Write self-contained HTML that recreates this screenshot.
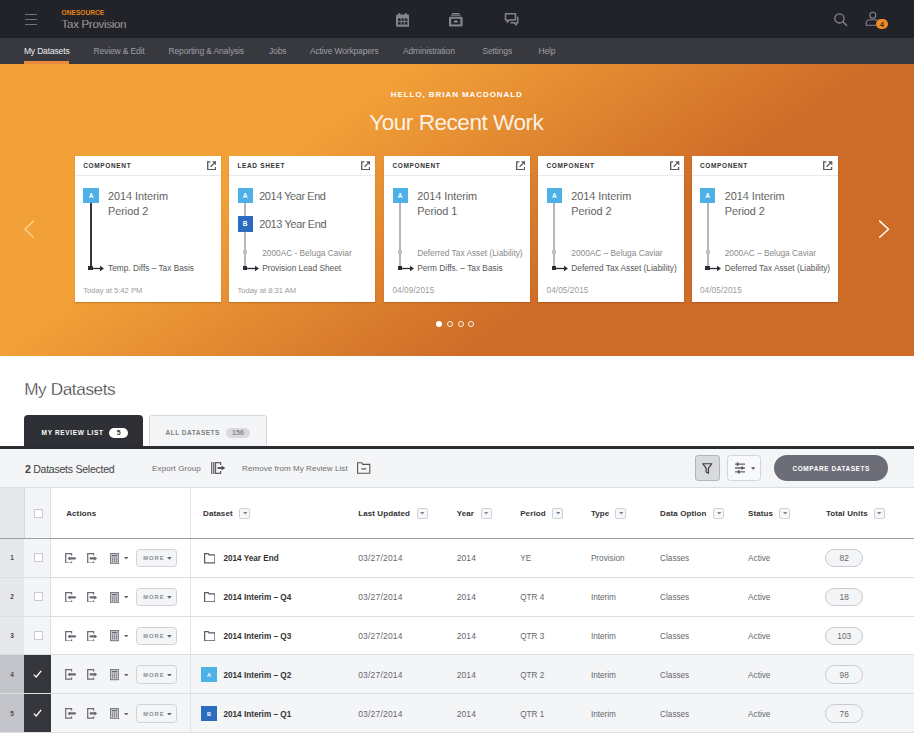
<!DOCTYPE html>
<html><head><meta charset="utf-8"><title>Tax Provision</title>
<style>
html,body{margin:0;padding:0;background:#fff;}
body{width:922px;height:737px;overflow:hidden;font-family:"Liberation Sans",sans-serif;}
#app{position:absolute;left:0;top:0;width:914px;height:733px;overflow:hidden;background:#fff;}
.b{position:absolute;display:block;}
.t{position:absolute;white-space:nowrap;line-height:1;}
</style></head><body><div id="app">
<div class="b" style="left:0.00px;top:0.00px;width:914.00px;height:38.00px;background:#222328"></div>
<div class="b" style="left:24.70px;top:13.95px;width:12.30px;height:1.50px;background:#74757c"></div>
<div class="b" style="left:24.70px;top:18.75px;width:12.30px;height:1.50px;background:#74757c"></div>
<div class="b" style="left:24.70px;top:23.55px;width:12.30px;height:1.50px;background:#74757c"></div>
<div class="t" style="left:61.60px;top:10px;font-size:6.6px;color:#E8811A;font-weight:700;">ONESOURCE</div>
<div class="t" style="left:61.60px;top:19px;font-size:11.5px;color:#c6c7cb;letter-spacing:-0.3px;-webkit-text-stroke:0.25px #222328;">Tax Provision</div>
<svg class="b" style="left:395.80px;top:12.60px;" width="13.4" height="14" viewBox="0 0 13.4 14"><rect x="0" y="1.6" width="13.4" height="12.2" rx="1.2" fill="#85868d"/><rect x="2.6" y="0" width="1.7" height="3" fill="#85868d"/><rect x="9" y="0" width="1.7" height="3" fill="#85868d"/><rect x="2" y="5.4" width="9.4" height="6.2" fill="#26272c"/><path d="M5.1 5.4v6.2M8.3 5.4v6.2M2 8.5h9.4" stroke="#85868d" stroke-width="0.9" fill="none"/></svg>
<svg class="b" style="left:449.00px;top:13.00px;" width="13.6" height="13.6" viewBox="0 0 13.6 13.6"><path d="M3 0.6h7.6M2 2.3h9.6" stroke="#85868d" stroke-width="1.1" fill="none"/><rect x="0" y="3.7" width="13.6" height="9.8" rx="1.3" fill="#85868d"/><rect x="2.2" y="5.8" width="9.2" height="5.6" fill="#26272c"/><rect x="5.2" y="7.8" width="3.2" height="1.5" fill="#b0b1b6"/></svg>
<svg class="b" style="left:504.20px;top:12.20px;" width="15" height="14" viewBox="0 0 15 14"><path d="M1.5 1.7h10v6.3h-6.3l-2 2.2v-2.2h-1.7z" fill="none" stroke="#85868d" stroke-width="1.5" stroke-linejoin="round"/><path d="M13.2 5.2h0.6v5.6h-1.4v2.2l-2.2-2.2h-3.8" fill="none" stroke="#85868d" stroke-width="1.4" stroke-linejoin="round"/></svg>
<svg class="b" style="left:833.00px;top:11.50px;" width="15" height="15" viewBox="0 0 15 15"><circle cx="6.4" cy="6.4" r="4.6" fill="none" stroke="#85868d" stroke-width="1.3"/><path d="M9.8 9.8L13.6 13.6" stroke="#85868d" stroke-width="1.4" stroke-linecap="round"/></svg>
<svg class="b" style="left:865.00px;top:11.00px;" width="14" height="16" viewBox="0 0 14 16"><circle cx="7.8" cy="4.2" r="3" fill="none" stroke="#85868d" stroke-width="1.1"/><path d="M1.2 14.3v-2.2c0-2 2-3.4 4-3.4h5.2c2 0 3 1.4 3 3.4v2.2z" fill="none" stroke="#85868d" stroke-width="1.1"/></svg>
<div class="b" style="left:875.50px;top:19.10px;width:12.90px;height:9.80px;background:#EE8A25;border-radius:5px"></div>
<div class="t" style="left:882.00px;top:21px;font-size:7px;color:#33250f;font-weight:700;transform:translateX(-50%);">4</div>
<div class="b" style="left:0.00px;top:38.00px;width:914.00px;height:25.70px;background:#38393F"></div>
<div class="t" style="left:23.90px;top:47px;font-size:8.5px;color:#ededef;letter-spacing:-0.15px;">My Datasets</div>
<div class="t" style="left:93.50px;top:47px;font-size:8.5px;color:#9d9ea5;letter-spacing:-0.15px;">Review &amp; Edit</div>
<div class="t" style="left:168.50px;top:47px;font-size:8.5px;color:#9d9ea5;letter-spacing:-0.15px;">Reporting &amp; Analysis</div>
<div class="t" style="left:269.00px;top:47px;font-size:8.5px;color:#9d9ea5;letter-spacing:-0.15px;">Jobs</div>
<div class="t" style="left:310.00px;top:47px;font-size:8.5px;color:#9d9ea5;letter-spacing:-0.15px;">Active Workpapers</div>
<div class="t" style="left:403.00px;top:47px;font-size:8.5px;color:#9d9ea5;letter-spacing:-0.15px;">Administration</div>
<div class="t" style="left:482.50px;top:47px;font-size:8.5px;color:#9d9ea5;letter-spacing:-0.15px;">Settings</div>
<div class="t" style="left:538.50px;top:47px;font-size:8.5px;color:#9d9ea5;letter-spacing:-0.15px;">Help</div>
<div class="b" style="left:23.90px;top:60.90px;width:45.20px;height:2.80px;background:#E98A3C"></div>
<div class="b" style="left:0.00px;top:63.70px;width:914.00px;height:292.10px;background:linear-gradient(145deg,#F2A038 0%,#F2A038 31%,#CD6B28 67%,#CD6B28 100%)"></div>
<div class="t" style="left:456.80px;top:91px;font-size:8px;color:#fff;font-weight:700;letter-spacing:0.93px;transform:translateX(-50%);">HELLO, BRIAN MACDONALD</div>
<div class="t" style="left:456.30px;top:112px;font-size:22.6px;color:rgba(255,255,255,.88);letter-spacing:-0.5px;transform:translateX(-50%);">Your Recent Work</div>
<svg class="b" style="left:20.00px;top:215.00px;" width="20" height="28" viewBox="0 0 20 28"><path d="M13.4 6.1L4.9 14.2L13.4 22.2" fill="none" stroke="#fbd28c" stroke-width="1.5" stroke-linecap="round" stroke-linejoin="round"/></svg>
<svg class="b" style="left:870.00px;top:215.00px;" width="24" height="28" viewBox="0 0 24 28"><path d="M9.7 6.1L18.5 14.2L9.7 22.2" fill="none" stroke="#fff" stroke-width="1.5" stroke-linecap="round" stroke-linejoin="round"/></svg>
<div class="b" style="left:435.90px;top:321.20px;width:6.00px;height:6.00px;background:#fff;border-radius:50%"></div>
<div class="b" style="left:446.80px;top:321.20px;width:6.00px;height:6.00px;border:1.8px solid #fdf1e4;border-radius:50%;box-sizing:border-box"></div>
<div class="b" style="left:457.60px;top:321.20px;width:6.00px;height:6.00px;border:1.8px solid #fdf1e4;border-radius:50%;box-sizing:border-box"></div>
<div class="b" style="left:467.90px;top:321.20px;width:6.00px;height:6.00px;border:1.8px solid #fdf1e4;border-radius:50%;box-sizing:border-box"></div>
<div class="b" style="left:75.00px;top:155.80px;width:146.00px;height:146.60px;background:#fff;box-shadow:0 1px 1px rgba(130,55,0,.3)"></div>
<div class="b" style="left:75.00px;top:175.00px;width:146.00px;height:1.00px;background:#e9eaec"></div>
<div class="t" style="left:83.20px;top:163px;font-size:6.5px;color:#333;font-weight:700;letter-spacing:0.65px;">COMPONENT</div>
<svg class="b" style="left:206.70px;top:160.70px;" width="9.6" height="9.4" viewBox="0 0 9.6 9.4"><path d="M3.4 0.9H0.7v7.8h7.9V6" fill="none" stroke="#5a5b63" stroke-width="1.35"/><path d="M3.6 5.8L8 1.4" fill="none" stroke="#5a5b63" stroke-width="1.3"/><path d="M5 0.3h4.3v4.3z" fill="#5a5b63"/></svg>
<div class="b" style="left:89.90px;top:203.00px;width:2.00px;height:65.00px;background:#333840"></div>
<div class="b" style="left:83.40px;top:188.20px;width:15.20px;height:15.30px;background:#4DB1E6"></div>
<div class="t" style="left:91.00px;top:193px;font-size:6.5px;color:#fff;font-weight:700;transform:translateX(-50%);">A</div>
<div class="t" style="left:108.00px;top:191px;font-size:10.9px;color:#2c2c2c;letter-spacing:-0.05px;-webkit-text-stroke:0.2px #fff;">2014 Interim</div>
<div class="t" style="left:108.00px;top:206px;font-size:10.9px;color:#2c2c2c;letter-spacing:-0.05px;-webkit-text-stroke:0.2px #fff;">Period 2</div>
<div class="b" style="left:88.40px;top:265.70px;width:4.80px;height:4.60px;background:#2a2d33"></div>
<svg class="b" style="left:92.40px;top:264.50px;" width="13" height="7" viewBox="0 0 13 7"><path d="M0 3.5h9" stroke="#2a2d33" stroke-width="1.3"/><path d="M8 0.8L12 3.5L8 6.2z" fill="#2a2d33"/></svg>
<div class="t" style="left:108.00px;top:264px;font-size:8.3px;color:#565656;">Temp. Diffs – Tax Basis</div>
<div class="t" style="left:83.20px;top:287px;font-size:7.6px;color:#9c9c9c;">Today at 5:42 PM</div>
<div class="b" style="left:229.20px;top:155.80px;width:146.00px;height:146.60px;background:#fff;box-shadow:0 1px 1px rgba(130,55,0,.3)"></div>
<div class="b" style="left:229.20px;top:175.00px;width:146.00px;height:1.00px;background:#e9eaec"></div>
<div class="t" style="left:237.40px;top:163px;font-size:6.5px;color:#333;font-weight:700;letter-spacing:0.65px;">LEAD SHEET</div>
<svg class="b" style="left:360.90px;top:160.70px;" width="9.6" height="9.4" viewBox="0 0 9.6 9.4"><path d="M3.4 0.9H0.7v7.8h7.9V6" fill="none" stroke="#5a5b63" stroke-width="1.35"/><path d="M3.6 5.8L8 1.4" fill="none" stroke="#5a5b63" stroke-width="1.3"/><path d="M5 0.3h4.3v4.3z" fill="#5a5b63"/></svg>
<div class="b" style="left:244.10px;top:203.00px;width:2.00px;height:65.00px;background:#b4b7bd"></div>
<div class="b" style="left:237.60px;top:188.20px;width:15.20px;height:15.30px;background:#4DB1E6"></div>
<div class="t" style="left:245.20px;top:193px;font-size:6.5px;color:#fff;font-weight:700;transform:translateX(-50%);">A</div>
<div class="b" style="left:237.60px;top:216.00px;width:15.20px;height:15.60px;background:#2B6CC0"></div>
<div class="t" style="left:245.20px;top:221px;font-size:6.5px;color:#fff;font-weight:700;transform:translateX(-50%);">B</div>
<div class="t" style="left:259.20px;top:219px;font-size:11px;color:#2c2c2c;letter-spacing:-0.4px;-webkit-text-stroke:0.2px #fff;">2013 Year End</div>
<div class="t" style="left:259.20px;top:191px;font-size:10.9px;color:#2c2c2c;letter-spacing:-0.4px;-webkit-text-stroke:0.2px #fff;">2014 Year End</div>
<div class="b" style="left:243.10px;top:250.00px;width:4.20px;height:4.40px;background:#bfc2c7"></div>
<div class="t" style="left:262.20px;top:249px;font-size:8.3px;color:#8a8a8a;">2000AC - Beluga Caviar</div>
<div class="b" style="left:242.60px;top:265.70px;width:4.80px;height:4.60px;background:#2a2d33"></div>
<svg class="b" style="left:246.60px;top:264.50px;" width="13" height="7" viewBox="0 0 13 7"><path d="M0 3.5h9" stroke="#2a2d33" stroke-width="1.3"/><path d="M8 0.8L12 3.5L8 6.2z" fill="#2a2d33"/></svg>
<div class="t" style="left:262.20px;top:264px;font-size:8.3px;color:#565656;">Provision Lead Sheet</div>
<div class="t" style="left:237.40px;top:287px;font-size:7.6px;color:#9c9c9c;">Today at 8:31 AM</div>
<div class="b" style="left:384.20px;top:155.80px;width:146.00px;height:146.60px;background:#fff;box-shadow:0 1px 1px rgba(130,55,0,.3)"></div>
<div class="b" style="left:384.20px;top:175.00px;width:146.00px;height:1.00px;background:#e9eaec"></div>
<div class="t" style="left:392.40px;top:163px;font-size:6.5px;color:#333;font-weight:700;letter-spacing:0.65px;">COMPONENT</div>
<svg class="b" style="left:515.90px;top:160.70px;" width="9.6" height="9.4" viewBox="0 0 9.6 9.4"><path d="M3.4 0.9H0.7v7.8h7.9V6" fill="none" stroke="#5a5b63" stroke-width="1.35"/><path d="M3.6 5.8L8 1.4" fill="none" stroke="#5a5b63" stroke-width="1.3"/><path d="M5 0.3h4.3v4.3z" fill="#5a5b63"/></svg>
<div class="b" style="left:399.10px;top:203.00px;width:2.00px;height:65.00px;background:#b4b7bd"></div>
<div class="b" style="left:392.60px;top:188.20px;width:15.20px;height:15.30px;background:#4DB1E6"></div>
<div class="t" style="left:400.20px;top:193px;font-size:6.5px;color:#fff;font-weight:700;transform:translateX(-50%);">A</div>
<div class="t" style="left:417.20px;top:191px;font-size:10.9px;color:#2c2c2c;letter-spacing:-0.05px;-webkit-text-stroke:0.2px #fff;">2014 Interim</div>
<div class="t" style="left:417.20px;top:206px;font-size:10.9px;color:#2c2c2c;letter-spacing:-0.05px;-webkit-text-stroke:0.2px #fff;">Period 1</div>
<div class="b" style="left:398.10px;top:250.00px;width:4.20px;height:4.40px;background:#bfc2c7"></div>
<div class="t" style="left:417.20px;top:249px;font-size:8.3px;color:#8a8a8a;">Deferred Tax Asset (Liability)</div>
<div class="b" style="left:397.60px;top:265.70px;width:4.80px;height:4.60px;background:#2a2d33"></div>
<svg class="b" style="left:401.60px;top:264.50px;" width="13" height="7" viewBox="0 0 13 7"><path d="M0 3.5h9" stroke="#2a2d33" stroke-width="1.3"/><path d="M8 0.8L12 3.5L8 6.2z" fill="#2a2d33"/></svg>
<div class="t" style="left:417.20px;top:264px;font-size:8.3px;color:#565656;">Perm Diffs. – Tax Basis</div>
<div class="t" style="left:392.40px;top:287px;font-size:8.2px;color:#9c9c9c;letter-spacing:0.1px;">04/09/2015</div>
<div class="b" style="left:538.30px;top:155.80px;width:146.00px;height:146.60px;background:#fff;box-shadow:0 1px 1px rgba(130,55,0,.3)"></div>
<div class="b" style="left:538.30px;top:175.00px;width:146.00px;height:1.00px;background:#e9eaec"></div>
<div class="t" style="left:546.50px;top:163px;font-size:6.5px;color:#333;font-weight:700;letter-spacing:0.65px;">COMPONENT</div>
<svg class="b" style="left:670.00px;top:160.70px;" width="9.6" height="9.4" viewBox="0 0 9.6 9.4"><path d="M3.4 0.9H0.7v7.8h7.9V6" fill="none" stroke="#5a5b63" stroke-width="1.35"/><path d="M3.6 5.8L8 1.4" fill="none" stroke="#5a5b63" stroke-width="1.3"/><path d="M5 0.3h4.3v4.3z" fill="#5a5b63"/></svg>
<div class="b" style="left:553.20px;top:203.00px;width:2.00px;height:65.00px;background:#b4b7bd"></div>
<div class="b" style="left:546.70px;top:188.20px;width:15.20px;height:15.30px;background:#4DB1E6"></div>
<div class="t" style="left:554.30px;top:193px;font-size:6.5px;color:#fff;font-weight:700;transform:translateX(-50%);">A</div>
<div class="t" style="left:571.30px;top:191px;font-size:10.9px;color:#2c2c2c;letter-spacing:-0.05px;-webkit-text-stroke:0.2px #fff;">2014 Interim</div>
<div class="t" style="left:571.30px;top:206px;font-size:10.9px;color:#2c2c2c;letter-spacing:-0.05px;-webkit-text-stroke:0.2px #fff;">Period 2</div>
<div class="b" style="left:552.20px;top:250.00px;width:4.20px;height:4.40px;background:#bfc2c7"></div>
<div class="t" style="left:571.30px;top:249px;font-size:8.3px;color:#8a8a8a;">2000AC – Beluga Caviar</div>
<div class="b" style="left:551.70px;top:265.70px;width:4.80px;height:4.60px;background:#2a2d33"></div>
<svg class="b" style="left:555.70px;top:264.50px;" width="13" height="7" viewBox="0 0 13 7"><path d="M0 3.5h9" stroke="#2a2d33" stroke-width="1.3"/><path d="M8 0.8L12 3.5L8 6.2z" fill="#2a2d33"/></svg>
<div class="t" style="left:571.30px;top:264px;font-size:8.3px;color:#565656;">Deferred Tax Asset (Liability)</div>
<div class="t" style="left:546.50px;top:287px;font-size:8.2px;color:#9c9c9c;letter-spacing:0.1px;">04/05/2015</div>
<div class="b" style="left:691.70px;top:155.80px;width:146.00px;height:146.60px;background:#fff;box-shadow:0 1px 1px rgba(130,55,0,.3)"></div>
<div class="b" style="left:691.70px;top:175.00px;width:146.00px;height:1.00px;background:#e9eaec"></div>
<div class="t" style="left:699.90px;top:163px;font-size:6.5px;color:#333;font-weight:700;letter-spacing:0.65px;">COMPONENT</div>
<svg class="b" style="left:823.40px;top:160.70px;" width="9.6" height="9.4" viewBox="0 0 9.6 9.4"><path d="M3.4 0.9H0.7v7.8h7.9V6" fill="none" stroke="#5a5b63" stroke-width="1.35"/><path d="M3.6 5.8L8 1.4" fill="none" stroke="#5a5b63" stroke-width="1.3"/><path d="M5 0.3h4.3v4.3z" fill="#5a5b63"/></svg>
<div class="b" style="left:706.60px;top:203.00px;width:2.00px;height:65.00px;background:#b4b7bd"></div>
<div class="b" style="left:700.10px;top:188.20px;width:15.20px;height:15.30px;background:#4DB1E6"></div>
<div class="t" style="left:707.70px;top:193px;font-size:6.5px;color:#fff;font-weight:700;transform:translateX(-50%);">A</div>
<div class="t" style="left:724.70px;top:191px;font-size:10.9px;color:#2c2c2c;letter-spacing:-0.05px;-webkit-text-stroke:0.2px #fff;">2014 Interim</div>
<div class="t" style="left:724.70px;top:206px;font-size:10.9px;color:#2c2c2c;letter-spacing:-0.05px;-webkit-text-stroke:0.2px #fff;">Period 2</div>
<div class="b" style="left:705.60px;top:250.00px;width:4.20px;height:4.40px;background:#bfc2c7"></div>
<div class="t" style="left:724.70px;top:249px;font-size:8.3px;color:#8a8a8a;">2000AC – Beluga Caviar</div>
<div class="b" style="left:705.10px;top:265.70px;width:4.80px;height:4.60px;background:#2a2d33"></div>
<svg class="b" style="left:709.10px;top:264.50px;" width="13" height="7" viewBox="0 0 13 7"><path d="M0 3.5h9" stroke="#2a2d33" stroke-width="1.3"/><path d="M8 0.8L12 3.5L8 6.2z" fill="#2a2d33"/></svg>
<div class="t" style="left:724.70px;top:264px;font-size:8.3px;color:#565656;">Deferred Tax Asset (Liability)</div>
<div class="t" style="left:699.90px;top:287px;font-size:8.2px;color:#9c9c9c;letter-spacing:0.1px;">04/05/2015</div>
<div class="t" style="left:24.20px;top:381px;font-size:17.2px;color:#333;letter-spacing:-0.4px;-webkit-text-stroke:0.32px #fff;">My Datasets</div>
<div class="b" style="left:24.30px;top:415.00px;width:118.40px;height:33.00px;background:#2E3036;border-radius:4px 4px 0 0"></div>
<div class="t" style="left:41.60px;top:430px;font-size:6.5px;color:#fff;font-weight:700;letter-spacing:0.65px;">MY REVIEW LIST</div>
<div class="b" style="left:109.30px;top:427.70px;width:18.80px;height:10.60px;background:#fff;border-radius:5.3px"></div>
<div class="t" style="left:118.70px;top:429px;font-size:7px;color:#333;font-weight:700;transform:translateX(-50%);">5</div>
<div class="b" style="left:149.40px;top:415.00px;width:117.80px;height:33.00px;background:#F4F5F7;border:1px solid #d6d8dc;border-radius:3px 3px 0 0;box-sizing:border-box"></div>
<div class="t" style="left:165.50px;top:430px;font-size:6.5px;color:#7d7d7d;font-weight:700;letter-spacing:0.5px;">ALL DATASETS</div>
<div class="b" style="left:226.20px;top:427.70px;width:23.40px;height:10.60px;background:#d9dade;border-radius:5.3px"></div>
<div class="t" style="left:237.90px;top:429px;font-size:7px;color:#8a8a8a;font-weight:700;letter-spacing:0.1px;transform:translateX(-50%);">156</div>
<div class="b" style="left:0.00px;top:446.00px;width:914.00px;height:3.00px;background:#2B2D33"></div>
<div class="b" style="left:0.00px;top:449.00px;width:914.00px;height:39.00px;background:#F4F5F7;border-bottom:1px solid #dcdde1;box-sizing:border-box"></div>
<div class="t" style="left:24.90px;top:464px;font-size:10.6px;color:#444;letter-spacing:-0.28px;"><b>2</b> Datasets Selected</div>
<div class="t" style="left:152.10px;top:465px;font-size:8px;color:#6e6e6e;letter-spacing:0.1px;">Export Group</div>
<svg class="b" style="left:211.00px;top:462.00px;" width="14.5" height="12" viewBox="0 0 14.5 12"><path d="M0.7 0v12M2.7 0v12" stroke="#6b6c74" stroke-width="1.3"/><path d="M9.6 3V0.6H4.5v10.8h5.1V9" fill="none" stroke="#5d5e66" stroke-width="1.3"/><path d="M6.6 6h5" stroke="#50515a" stroke-width="1.9"/><path d="M10.6 3.4L14.3 6L10.6 8.6z" fill="#50515a"/></svg>
<div class="t" style="left:242.10px;top:465px;font-size:8px;color:#6e6e6e;letter-spacing:0.06px;">Remove from My Review List</div>
<svg class="b" style="left:357.00px;top:461.90px;" width="13.5" height="12" viewBox="0 0 13.5 12"><path d="M0.6 11.2V0.8h4.2l1 1.6h7v8.8z" fill="none" stroke="#555" stroke-width="1.1"/><path d="M4.4 6.9h4.8" stroke="#555" stroke-width="1.2"/></svg>
<div class="b" style="left:695.00px;top:455.20px;width:25.20px;height:25.50px;background:#d9dade;border:1px solid #b3b5bb;border-radius:3px;box-sizing:border-box"></div>
<svg class="b" style="left:702.30px;top:463.30px;" width="10.6" height="11.5" viewBox="0 0 11.5 12.5"><path d="M0.8 0.8h9.9L7 5.6v5.6L4.5 9.8V5.6z" fill="none" stroke="#3a3b42" stroke-width="1.3" stroke-linejoin="round"/></svg>
<div class="b" style="left:726.80px;top:455.20px;width:33.80px;height:25.50px;background:#f8f9fb;border:1px solid #d4d6da;border-radius:3.5px;box-sizing:border-box"></div>
<svg class="b" style="left:735.10px;top:462.00px;" width="10" height="12" viewBox="0 0 10 12"><path d="M0 2.2h10M0 6h10M0 9.8h10" stroke="#63646c" stroke-width="1.3"/><path d="M2.6 0.6v3.2M7.2 4.4v3.2M3.8 8.2v3.2" stroke="#55565e" stroke-width="1.8"/></svg>
<svg class="b" style="left:751.00px;top:467.40px;" width="4.4" height="3" viewBox="0 0 5 3"><path d="M0 0h5L2.5 3z" fill="#55565e"/></svg>
<div class="b" style="left:773.70px;top:455.20px;width:114.40px;height:25.50px;background:#6C6D77;border-radius:13px"></div>
<div class="t" style="left:831.20px;top:466px;font-size:6.5px;color:#fff;font-weight:700;letter-spacing:0.55px;transform:translateX(-50%);">COMPARE DATASETS</div>
<div class="b" style="left:0.00px;top:488.00px;width:24.30px;height:50.30px;background:#E7E8EB"></div>
<div class="b" style="left:24.30px;top:488.00px;width:26.20px;height:50.30px;background:#F4F5F7"></div>
<div class="b" style="left:50.00px;top:488.00px;width:1.00px;height:245.00px;background:#dfe0e4"></div>
<div class="b" style="left:24.00px;top:488.00px;width:1.00px;height:166.90px;background:#d5d7db"></div>
<div class="b" style="left:190.30px;top:488.00px;width:1.00px;height:245.00px;background:#e2e3e6"></div>
<div class="b" style="left:0.00px;top:654.90px;width:914.00px;height:77.70px;background:#F4F5F7"></div>
<div class="b" style="left:0.00px;top:538.30px;width:24.30px;height:116.60px;background:#E7E8EB"></div>
<div class="b" style="left:24.30px;top:538.30px;width:26.20px;height:116.60px;background:#F4F5F7"></div>
<div class="b" style="left:0.00px;top:654.90px;width:24.30px;height:77.70px;background:#C4C5CA"></div>
<div class="b" style="left:24.30px;top:654.90px;width:26.40px;height:77.70px;background:#36373D"></div>
<div class="b" style="left:190.30px;top:654.90px;width:1.00px;height:77.70px;background:#e2e3e6"></div>
<div class="b" style="left:0.00px;top:537.60px;width:914.00px;height:1.40px;background:#9c9da3"></div>
<div class="b" style="left:0.00px;top:576.70px;width:914.00px;height:1.00px;background:#dcdde1"></div>
<div class="b" style="left:0.00px;top:615.60px;width:914.00px;height:1.00px;background:#dcdde1"></div>
<div class="b" style="left:0.00px;top:654.40px;width:914.00px;height:1.00px;background:#dcdde1"></div>
<div class="b" style="left:0.00px;top:693.30px;width:914.00px;height:1.00px;background:#dcdde1"></div>
<div class="b" style="left:0.00px;top:732.10px;width:914.00px;height:1.00px;background:#dcdde1"></div>
<div class="b" style="left:33.60px;top:509.20px;width:9.20px;height:9.20px;background:#fff;border:1px solid #c9cacf;box-sizing:border-box"></div>
<div class="t" style="left:66.20px;top:510px;font-size:8px;color:#333;font-weight:700;letter-spacing:0.1px;">Actions</div>
<div class="t" style="left:203.10px;top:510px;font-size:8px;color:#333;font-weight:700;letter-spacing:0.1px;">Dataset</div>
<div class="b" style="left:239.40px;top:507.80px;width:11.00px;height:11.00px;background:#f7f7f9;border:1px solid #d0d1d6;border-radius:2px;box-sizing:border-box"></div>
<svg class="b" style="left:242.70px;top:512.40px;" width="4.4" height="2.6" viewBox="0 0 4.4 2.6"><path d="M0 0h4.4L2.2 2.6z" fill="#85868d"/></svg>
<div class="t" style="left:358.20px;top:510px;font-size:8px;color:#333;font-weight:700;letter-spacing:0.1px;">Last Updated</div>
<div class="b" style="left:416.70px;top:507.80px;width:11.00px;height:11.00px;background:#f7f7f9;border:1px solid #d0d1d6;border-radius:2px;box-sizing:border-box"></div>
<svg class="b" style="left:420.00px;top:512.40px;" width="4.4" height="2.6" viewBox="0 0 4.4 2.6"><path d="M0 0h4.4L2.2 2.6z" fill="#85868d"/></svg>
<div class="t" style="left:456.70px;top:510px;font-size:8px;color:#333;font-weight:700;letter-spacing:0.1px;">Year</div>
<div class="b" style="left:480.90px;top:507.80px;width:11.00px;height:11.00px;background:#f7f7f9;border:1px solid #d0d1d6;border-radius:2px;box-sizing:border-box"></div>
<svg class="b" style="left:484.20px;top:512.40px;" width="4.4" height="2.6" viewBox="0 0 4.4 2.6"><path d="M0 0h4.4L2.2 2.6z" fill="#85868d"/></svg>
<div class="t" style="left:520.20px;top:510px;font-size:8px;color:#333;font-weight:700;letter-spacing:0.1px;">Period</div>
<div class="b" style="left:552.20px;top:507.80px;width:11.00px;height:11.00px;background:#f7f7f9;border:1px solid #d0d1d6;border-radius:2px;box-sizing:border-box"></div>
<svg class="b" style="left:555.50px;top:512.40px;" width="4.4" height="2.6" viewBox="0 0 4.4 2.6"><path d="M0 0h4.4L2.2 2.6z" fill="#85868d"/></svg>
<div class="t" style="left:590.90px;top:510px;font-size:8px;color:#333;font-weight:700;letter-spacing:0.1px;">Type</div>
<div class="b" style="left:615.20px;top:507.80px;width:11.00px;height:11.00px;background:#f7f7f9;border:1px solid #d0d1d6;border-radius:2px;box-sizing:border-box"></div>
<svg class="b" style="left:618.50px;top:512.40px;" width="4.4" height="2.6" viewBox="0 0 4.4 2.6"><path d="M0 0h4.4L2.2 2.6z" fill="#85868d"/></svg>
<div class="t" style="left:660.10px;top:510px;font-size:8px;color:#333;font-weight:700;letter-spacing:0.1px;">Data Option</div>
<div class="b" style="left:713.20px;top:507.80px;width:11.00px;height:11.00px;background:#f7f7f9;border:1px solid #d0d1d6;border-radius:2px;box-sizing:border-box"></div>
<svg class="b" style="left:716.50px;top:512.40px;" width="4.4" height="2.6" viewBox="0 0 4.4 2.6"><path d="M0 0h4.4L2.2 2.6z" fill="#85868d"/></svg>
<div class="t" style="left:748.10px;top:510px;font-size:8px;color:#333;font-weight:700;letter-spacing:0.1px;">Status</div>
<div class="b" style="left:779.20px;top:507.80px;width:11.00px;height:11.00px;background:#f7f7f9;border:1px solid #d0d1d6;border-radius:2px;box-sizing:border-box"></div>
<svg class="b" style="left:782.50px;top:512.40px;" width="4.4" height="2.6" viewBox="0 0 4.4 2.6"><path d="M0 0h4.4L2.2 2.6z" fill="#85868d"/></svg>
<div class="t" style="left:825.90px;top:510px;font-size:8px;color:#333;font-weight:700;letter-spacing:0.1px;">Total Units</div>
<div class="b" style="left:874.00px;top:507.80px;width:11.00px;height:11.00px;background:#f7f7f9;border:1px solid #d0d1d6;border-radius:2px;box-sizing:border-box"></div>
<svg class="b" style="left:877.30px;top:512.40px;" width="4.4" height="2.6" viewBox="0 0 4.4 2.6"><path d="M0 0h4.4L2.2 2.6z" fill="#85868d"/></svg>
<div class="t" style="left:12.10px;top:555px;font-size:6.5px;color:#4a4a4a;font-weight:700;transform:translateX(-50%);">1</div>
<div class="b" style="left:33.60px;top:553.30px;width:9.20px;height:9.20px;background:#fff;border:1px solid #c9cacf;box-sizing:border-box"></div>
<svg class="b" style="left:64.80px;top:552.70px;" width="11" height="10.8" viewBox="0 0 11 10.8"><path d="M6.6 2.4V0.6H0.7v9.6h5.9V8.4" fill="none" stroke="#696a72" stroke-width="1.2"/><path d="M4.6 5.4h5.4" stroke="#696a72" stroke-width="2.3" stroke-linecap="round"/><path d="M5.2 3.4L2.6 5.4L5.2 7.4z" fill="#696a72"/></svg>
<svg class="b" style="left:86.80px;top:552.70px;" width="11" height="10.8" viewBox="0 0 11 10.8"><path d="M6.6 2.4V0.6H0.7v9.6h5.9V8.4" fill="none" stroke="#696a72" stroke-width="1.2"/><path d="M3.6 5.4h4.4" stroke="#696a72" stroke-width="2.3" stroke-linecap="round"/><path d="M7.4 3.4L10.2 5.4L7.4 7.4z" fill="#696a72"/></svg>
<svg class="b" style="left:110.00px;top:552.60px;" width="9.4" height="11.4" viewBox="0 0 9.4 11.4"><rect x="0.5" y="0.5" width="8.2" height="10.2" fill="#cfd0d4" stroke="#7c7d85" stroke-width="1.1"/><rect x="1.9" y="1.9" width="5.4" height="1.4" fill="#696a72"/><path d="M2 5h1.2M4 5h1.2M6 5h1.2M2 6.9h1.2M4 6.9h1.2M6 6.9h1.2M2 8.8h1.2M4 8.8h1.2M6 8.8h1.2" stroke="#696a72" stroke-width="1.1"/></svg>
<svg class="b" style="left:123.60px;top:557.00px;" width="4.4" height="2.6" viewBox="0 0 4.4 2.6"><path d="M0 0h4.4L2.2 2.6z" fill="#666"/></svg>
<div class="b" style="left:136.40px;top:548.70px;width:40.20px;height:18.40px;background:#F4F5F7;border:1px solid #d0d2d7;border-radius:3.5px;box-sizing:border-box"></div>
<div class="t" style="left:143.30px;top:556px;font-size:5.8px;color:#8d8d90;font-weight:700;letter-spacing:0.95px;">MORE</div>
<svg class="b" style="left:167.20px;top:557.00px;" width="4.8" height="2.8" viewBox="0 0 4.4 2.6"><path d="M0 0h4.4L2.2 2.6z" fill="#666"/></svg>
<svg class="b" style="left:203.70px;top:553.20px;" width="11.6" height="10.4" viewBox="0 0 11.6 10.4"><path d="M0.6 9.8V0.6h3.6l0.9 1.4h5.9V9.8z" fill="none" stroke="#5a5b63" stroke-width="1.25"/></svg>
<div class="t" style="left:223.40px;top:555px;font-size:8.2px;color:#333;font-weight:700;">2014 Year End</div>
<div class="t" style="left:358.20px;top:554px;font-size:8.5px;color:#66676e;letter-spacing:0.2px;">03/27/2014</div>
<div class="t" style="left:456.70px;top:554px;font-size:8.5px;color:#66676e;letter-spacing:0.1px;">2014</div>
<div class="t" style="left:520.20px;top:555px;font-size:8.2px;color:#66676e;">YE</div>
<div class="t" style="left:590.90px;top:555px;font-size:8.2px;color:#66676e;">Provision</div>
<div class="t" style="left:660.10px;top:555px;font-size:8.2px;color:#66676e;">Classes</div>
<div class="t" style="left:748.10px;top:555px;font-size:8.2px;color:#66676e;">Active</div>
<div class="b" style="left:824.90px;top:548.70px;width:38.20px;height:18.50px;background:#F4F5F7;border:1px solid #c9cacf;border-radius:9.3px;box-sizing:border-box"></div>
<div class="t" style="left:844.20px;top:554px;font-size:8.3px;color:#66676e;transform:translateX(-50%);">82</div>
<div class="t" style="left:12.10px;top:594px;font-size:6.5px;color:#4a4a4a;font-weight:700;transform:translateX(-50%);">2</div>
<div class="b" style="left:33.60px;top:592.20px;width:9.20px;height:9.20px;background:#fff;border:1px solid #c9cacf;box-sizing:border-box"></div>
<svg class="b" style="left:64.80px;top:591.60px;" width="11" height="10.8" viewBox="0 0 11 10.8"><path d="M6.6 2.4V0.6H0.7v9.6h5.9V8.4" fill="none" stroke="#696a72" stroke-width="1.2"/><path d="M4.6 5.4h5.4" stroke="#696a72" stroke-width="2.3" stroke-linecap="round"/><path d="M5.2 3.4L2.6 5.4L5.2 7.4z" fill="#696a72"/></svg>
<svg class="b" style="left:86.80px;top:591.60px;" width="11" height="10.8" viewBox="0 0 11 10.8"><path d="M6.6 2.4V0.6H0.7v9.6h5.9V8.4" fill="none" stroke="#696a72" stroke-width="1.2"/><path d="M3.6 5.4h4.4" stroke="#696a72" stroke-width="2.3" stroke-linecap="round"/><path d="M7.4 3.4L10.2 5.4L7.4 7.4z" fill="#696a72"/></svg>
<svg class="b" style="left:110.00px;top:591.50px;" width="9.4" height="11.4" viewBox="0 0 9.4 11.4"><rect x="0.5" y="0.5" width="8.2" height="10.2" fill="#cfd0d4" stroke="#7c7d85" stroke-width="1.1"/><rect x="1.9" y="1.9" width="5.4" height="1.4" fill="#696a72"/><path d="M2 5h1.2M4 5h1.2M6 5h1.2M2 6.9h1.2M4 6.9h1.2M6 6.9h1.2M2 8.8h1.2M4 8.8h1.2M6 8.8h1.2" stroke="#696a72" stroke-width="1.1"/></svg>
<svg class="b" style="left:123.60px;top:595.90px;" width="4.4" height="2.6" viewBox="0 0 4.4 2.6"><path d="M0 0h4.4L2.2 2.6z" fill="#666"/></svg>
<div class="b" style="left:136.40px;top:587.60px;width:40.20px;height:18.40px;background:#F4F5F7;border:1px solid #d0d2d7;border-radius:3.5px;box-sizing:border-box"></div>
<div class="t" style="left:143.30px;top:595px;font-size:5.8px;color:#8d8d90;font-weight:700;letter-spacing:0.95px;">MORE</div>
<svg class="b" style="left:167.20px;top:595.90px;" width="4.8" height="2.8" viewBox="0 0 4.4 2.6"><path d="M0 0h4.4L2.2 2.6z" fill="#666"/></svg>
<svg class="b" style="left:203.70px;top:592.10px;" width="11.6" height="10.4" viewBox="0 0 11.6 10.4"><path d="M0.6 9.8V0.6h3.6l0.9 1.4h5.9V9.8z" fill="none" stroke="#5a5b63" stroke-width="1.25"/></svg>
<div class="t" style="left:223.40px;top:594px;font-size:8.2px;color:#333;font-weight:700;">2014 Interim – Q4</div>
<div class="t" style="left:358.20px;top:593px;font-size:8.5px;color:#66676e;letter-spacing:0.2px;">03/27/2014</div>
<div class="t" style="left:456.70px;top:593px;font-size:8.5px;color:#66676e;letter-spacing:0.1px;">2014</div>
<div class="t" style="left:520.20px;top:594px;font-size:8.2px;color:#66676e;">QTR 4</div>
<div class="t" style="left:590.90px;top:594px;font-size:8.2px;color:#66676e;">Interim</div>
<div class="t" style="left:660.10px;top:594px;font-size:8.2px;color:#66676e;">Classes</div>
<div class="t" style="left:748.10px;top:594px;font-size:8.2px;color:#66676e;">Active</div>
<div class="b" style="left:824.90px;top:587.60px;width:38.20px;height:18.50px;background:#F4F5F7;border:1px solid #c9cacf;border-radius:9.3px;box-sizing:border-box"></div>
<div class="t" style="left:844.20px;top:593px;font-size:8.3px;color:#66676e;transform:translateX(-50%);">18</div>
<div class="t" style="left:12.10px;top:633px;font-size:6.5px;color:#4a4a4a;font-weight:700;transform:translateX(-50%);">3</div>
<div class="b" style="left:33.60px;top:631.10px;width:9.20px;height:9.20px;background:#fff;border:1px solid #c9cacf;box-sizing:border-box"></div>
<svg class="b" style="left:64.80px;top:630.50px;" width="11" height="10.8" viewBox="0 0 11 10.8"><path d="M6.6 2.4V0.6H0.7v9.6h5.9V8.4" fill="none" stroke="#696a72" stroke-width="1.2"/><path d="M4.6 5.4h5.4" stroke="#696a72" stroke-width="2.3" stroke-linecap="round"/><path d="M5.2 3.4L2.6 5.4L5.2 7.4z" fill="#696a72"/></svg>
<svg class="b" style="left:86.80px;top:630.50px;" width="11" height="10.8" viewBox="0 0 11 10.8"><path d="M6.6 2.4V0.6H0.7v9.6h5.9V8.4" fill="none" stroke="#696a72" stroke-width="1.2"/><path d="M3.6 5.4h4.4" stroke="#696a72" stroke-width="2.3" stroke-linecap="round"/><path d="M7.4 3.4L10.2 5.4L7.4 7.4z" fill="#696a72"/></svg>
<svg class="b" style="left:110.00px;top:630.40px;" width="9.4" height="11.4" viewBox="0 0 9.4 11.4"><rect x="0.5" y="0.5" width="8.2" height="10.2" fill="#cfd0d4" stroke="#7c7d85" stroke-width="1.1"/><rect x="1.9" y="1.9" width="5.4" height="1.4" fill="#696a72"/><path d="M2 5h1.2M4 5h1.2M6 5h1.2M2 6.9h1.2M4 6.9h1.2M6 6.9h1.2M2 8.8h1.2M4 8.8h1.2M6 8.8h1.2" stroke="#696a72" stroke-width="1.1"/></svg>
<svg class="b" style="left:123.60px;top:634.80px;" width="4.4" height="2.6" viewBox="0 0 4.4 2.6"><path d="M0 0h4.4L2.2 2.6z" fill="#666"/></svg>
<div class="b" style="left:136.40px;top:626.50px;width:40.20px;height:18.40px;background:#F4F5F7;border:1px solid #d0d2d7;border-radius:3.5px;box-sizing:border-box"></div>
<div class="t" style="left:143.30px;top:634px;font-size:5.8px;color:#8d8d90;font-weight:700;letter-spacing:0.95px;">MORE</div>
<svg class="b" style="left:167.20px;top:634.80px;" width="4.8" height="2.8" viewBox="0 0 4.4 2.6"><path d="M0 0h4.4L2.2 2.6z" fill="#666"/></svg>
<svg class="b" style="left:203.70px;top:631.00px;" width="11.6" height="10.4" viewBox="0 0 11.6 10.4"><path d="M0.6 9.8V0.6h3.6l0.9 1.4h5.9V9.8z" fill="none" stroke="#5a5b63" stroke-width="1.25"/></svg>
<div class="t" style="left:223.40px;top:633px;font-size:8.2px;color:#333;font-weight:700;">2014 Interim – Q3</div>
<div class="t" style="left:358.20px;top:632px;font-size:8.5px;color:#66676e;letter-spacing:0.2px;">03/27/2014</div>
<div class="t" style="left:456.70px;top:632px;font-size:8.5px;color:#66676e;letter-spacing:0.1px;">2014</div>
<div class="t" style="left:520.20px;top:633px;font-size:8.2px;color:#66676e;">QTR 3</div>
<div class="t" style="left:590.90px;top:633px;font-size:8.2px;color:#66676e;">Interim</div>
<div class="t" style="left:660.10px;top:633px;font-size:8.2px;color:#66676e;">Classes</div>
<div class="t" style="left:748.10px;top:633px;font-size:8.2px;color:#66676e;">Active</div>
<div class="b" style="left:824.90px;top:626.50px;width:38.20px;height:18.50px;background:#F4F5F7;border:1px solid #c9cacf;border-radius:9.3px;box-sizing:border-box"></div>
<div class="t" style="left:844.20px;top:632px;font-size:8.3px;color:#66676e;transform:translateX(-50%);">103</div>
<div class="t" style="left:12.10px;top:672px;font-size:6.5px;color:#4a4a4a;font-weight:700;transform:translateX(-50%);">4</div>
<svg class="b" style="left:33.20px;top:670.30px;" width="9" height="8" viewBox="0 0 9 8"><path d="M0.8 4.6L3.2 7L8.2 0.8" fill="none" stroke="#fff" stroke-width="1.3"/></svg>
<svg class="b" style="left:64.80px;top:669.30px;" width="11" height="10.8" viewBox="0 0 11 10.8"><path d="M6.6 2.4V0.6H0.7v9.6h5.9V8.4" fill="none" stroke="#696a72" stroke-width="1.2"/><path d="M4.6 5.4h5.4" stroke="#696a72" stroke-width="2.3" stroke-linecap="round"/><path d="M5.2 3.4L2.6 5.4L5.2 7.4z" fill="#696a72"/></svg>
<svg class="b" style="left:86.80px;top:669.30px;" width="11" height="10.8" viewBox="0 0 11 10.8"><path d="M6.6 2.4V0.6H0.7v9.6h5.9V8.4" fill="none" stroke="#696a72" stroke-width="1.2"/><path d="M3.6 5.4h4.4" stroke="#696a72" stroke-width="2.3" stroke-linecap="round"/><path d="M7.4 3.4L10.2 5.4L7.4 7.4z" fill="#696a72"/></svg>
<svg class="b" style="left:110.00px;top:669.20px;" width="9.4" height="11.4" viewBox="0 0 9.4 11.4"><rect x="0.5" y="0.5" width="8.2" height="10.2" fill="#cfd0d4" stroke="#7c7d85" stroke-width="1.1"/><rect x="1.9" y="1.9" width="5.4" height="1.4" fill="#696a72"/><path d="M2 5h1.2M4 5h1.2M6 5h1.2M2 6.9h1.2M4 6.9h1.2M6 6.9h1.2M2 8.8h1.2M4 8.8h1.2M6 8.8h1.2" stroke="#696a72" stroke-width="1.1"/></svg>
<svg class="b" style="left:123.60px;top:673.60px;" width="4.4" height="2.6" viewBox="0 0 4.4 2.6"><path d="M0 0h4.4L2.2 2.6z" fill="#666"/></svg>
<div class="b" style="left:136.40px;top:665.30px;width:40.20px;height:18.40px;background:#F4F5F7;border:1px solid #d0d2d7;border-radius:3.5px;box-sizing:border-box"></div>
<div class="t" style="left:143.30px;top:673px;font-size:5.8px;color:#8d8d90;font-weight:700;letter-spacing:0.95px;">MORE</div>
<svg class="b" style="left:167.20px;top:673.60px;" width="4.8" height="2.8" viewBox="0 0 4.4 2.6"><path d="M0 0h4.4L2.2 2.6z" fill="#666"/></svg>
<div class="b" style="left:201.40px;top:666.80px;width:15.50px;height:15.20px;background:#4DB1E6"></div>
<div class="t" style="left:209.10px;top:673px;font-size:5.6px;color:#fff;font-weight:700;transform:translateX(-50%);">A</div>
<div class="t" style="left:223.40px;top:672px;font-size:8.2px;color:#333;font-weight:700;">2014 Interim – Q2</div>
<div class="t" style="left:358.20px;top:671px;font-size:8.5px;color:#66676e;letter-spacing:0.2px;">03/27/2014</div>
<div class="t" style="left:456.70px;top:671px;font-size:8.5px;color:#66676e;letter-spacing:0.1px;">2014</div>
<div class="t" style="left:520.20px;top:672px;font-size:8.2px;color:#66676e;">QTR 2</div>
<div class="t" style="left:590.90px;top:672px;font-size:8.2px;color:#66676e;">Interim</div>
<div class="t" style="left:660.10px;top:672px;font-size:8.2px;color:#66676e;">Classes</div>
<div class="t" style="left:748.10px;top:672px;font-size:8.2px;color:#66676e;">Active</div>
<div class="b" style="left:824.90px;top:665.30px;width:38.20px;height:18.50px;background:#F4F5F7;border:1px solid #c9cacf;border-radius:9.3px;box-sizing:border-box"></div>
<div class="t" style="left:844.20px;top:671px;font-size:8.3px;color:#66676e;transform:translateX(-50%);">98</div>
<div class="t" style="left:12.10px;top:711px;font-size:6.5px;color:#4a4a4a;font-weight:700;transform:translateX(-50%);">5</div>
<svg class="b" style="left:33.20px;top:709.20px;" width="9" height="8" viewBox="0 0 9 8"><path d="M0.8 4.6L3.2 7L8.2 0.8" fill="none" stroke="#fff" stroke-width="1.3"/></svg>
<svg class="b" style="left:64.80px;top:708.20px;" width="11" height="10.8" viewBox="0 0 11 10.8"><path d="M6.6 2.4V0.6H0.7v9.6h5.9V8.4" fill="none" stroke="#696a72" stroke-width="1.2"/><path d="M4.6 5.4h5.4" stroke="#696a72" stroke-width="2.3" stroke-linecap="round"/><path d="M5.2 3.4L2.6 5.4L5.2 7.4z" fill="#696a72"/></svg>
<svg class="b" style="left:86.80px;top:708.20px;" width="11" height="10.8" viewBox="0 0 11 10.8"><path d="M6.6 2.4V0.6H0.7v9.6h5.9V8.4" fill="none" stroke="#696a72" stroke-width="1.2"/><path d="M3.6 5.4h4.4" stroke="#696a72" stroke-width="2.3" stroke-linecap="round"/><path d="M7.4 3.4L10.2 5.4L7.4 7.4z" fill="#696a72"/></svg>
<svg class="b" style="left:110.00px;top:708.10px;" width="9.4" height="11.4" viewBox="0 0 9.4 11.4"><rect x="0.5" y="0.5" width="8.2" height="10.2" fill="#cfd0d4" stroke="#7c7d85" stroke-width="1.1"/><rect x="1.9" y="1.9" width="5.4" height="1.4" fill="#696a72"/><path d="M2 5h1.2M4 5h1.2M6 5h1.2M2 6.9h1.2M4 6.9h1.2M6 6.9h1.2M2 8.8h1.2M4 8.8h1.2M6 8.8h1.2" stroke="#696a72" stroke-width="1.1"/></svg>
<svg class="b" style="left:123.60px;top:712.50px;" width="4.4" height="2.6" viewBox="0 0 4.4 2.6"><path d="M0 0h4.4L2.2 2.6z" fill="#666"/></svg>
<div class="b" style="left:136.40px;top:704.20px;width:40.20px;height:18.40px;background:#F4F5F7;border:1px solid #d0d2d7;border-radius:3.5px;box-sizing:border-box"></div>
<div class="t" style="left:143.30px;top:712px;font-size:5.8px;color:#8d8d90;font-weight:700;letter-spacing:0.95px;">MORE</div>
<svg class="b" style="left:167.20px;top:712.50px;" width="4.8" height="2.8" viewBox="0 0 4.4 2.6"><path d="M0 0h4.4L2.2 2.6z" fill="#666"/></svg>
<div class="b" style="left:201.40px;top:705.70px;width:15.50px;height:15.20px;background:#2B6CC0"></div>
<div class="t" style="left:209.10px;top:712px;font-size:5.6px;color:#fff;font-weight:700;transform:translateX(-50%);">B</div>
<div class="t" style="left:223.40px;top:711px;font-size:8.2px;color:#333;font-weight:700;">2014 Interim – Q1</div>
<div class="t" style="left:358.20px;top:710px;font-size:8.5px;color:#66676e;letter-spacing:0.2px;">03/27/2014</div>
<div class="t" style="left:456.70px;top:710px;font-size:8.5px;color:#66676e;letter-spacing:0.1px;">2014</div>
<div class="t" style="left:520.20px;top:711px;font-size:8.2px;color:#66676e;">QTR 1</div>
<div class="t" style="left:590.90px;top:711px;font-size:8.2px;color:#66676e;">Interim</div>
<div class="t" style="left:660.10px;top:711px;font-size:8.2px;color:#66676e;">Classes</div>
<div class="t" style="left:748.10px;top:711px;font-size:8.2px;color:#66676e;">Active</div>
<div class="b" style="left:824.90px;top:704.20px;width:38.20px;height:18.50px;background:#F4F5F7;border:1px solid #c9cacf;border-radius:9.3px;box-sizing:border-box"></div>
<div class="t" style="left:844.20px;top:710px;font-size:8.3px;color:#66676e;transform:translateX(-50%);">76</div>
</div></body></html>
